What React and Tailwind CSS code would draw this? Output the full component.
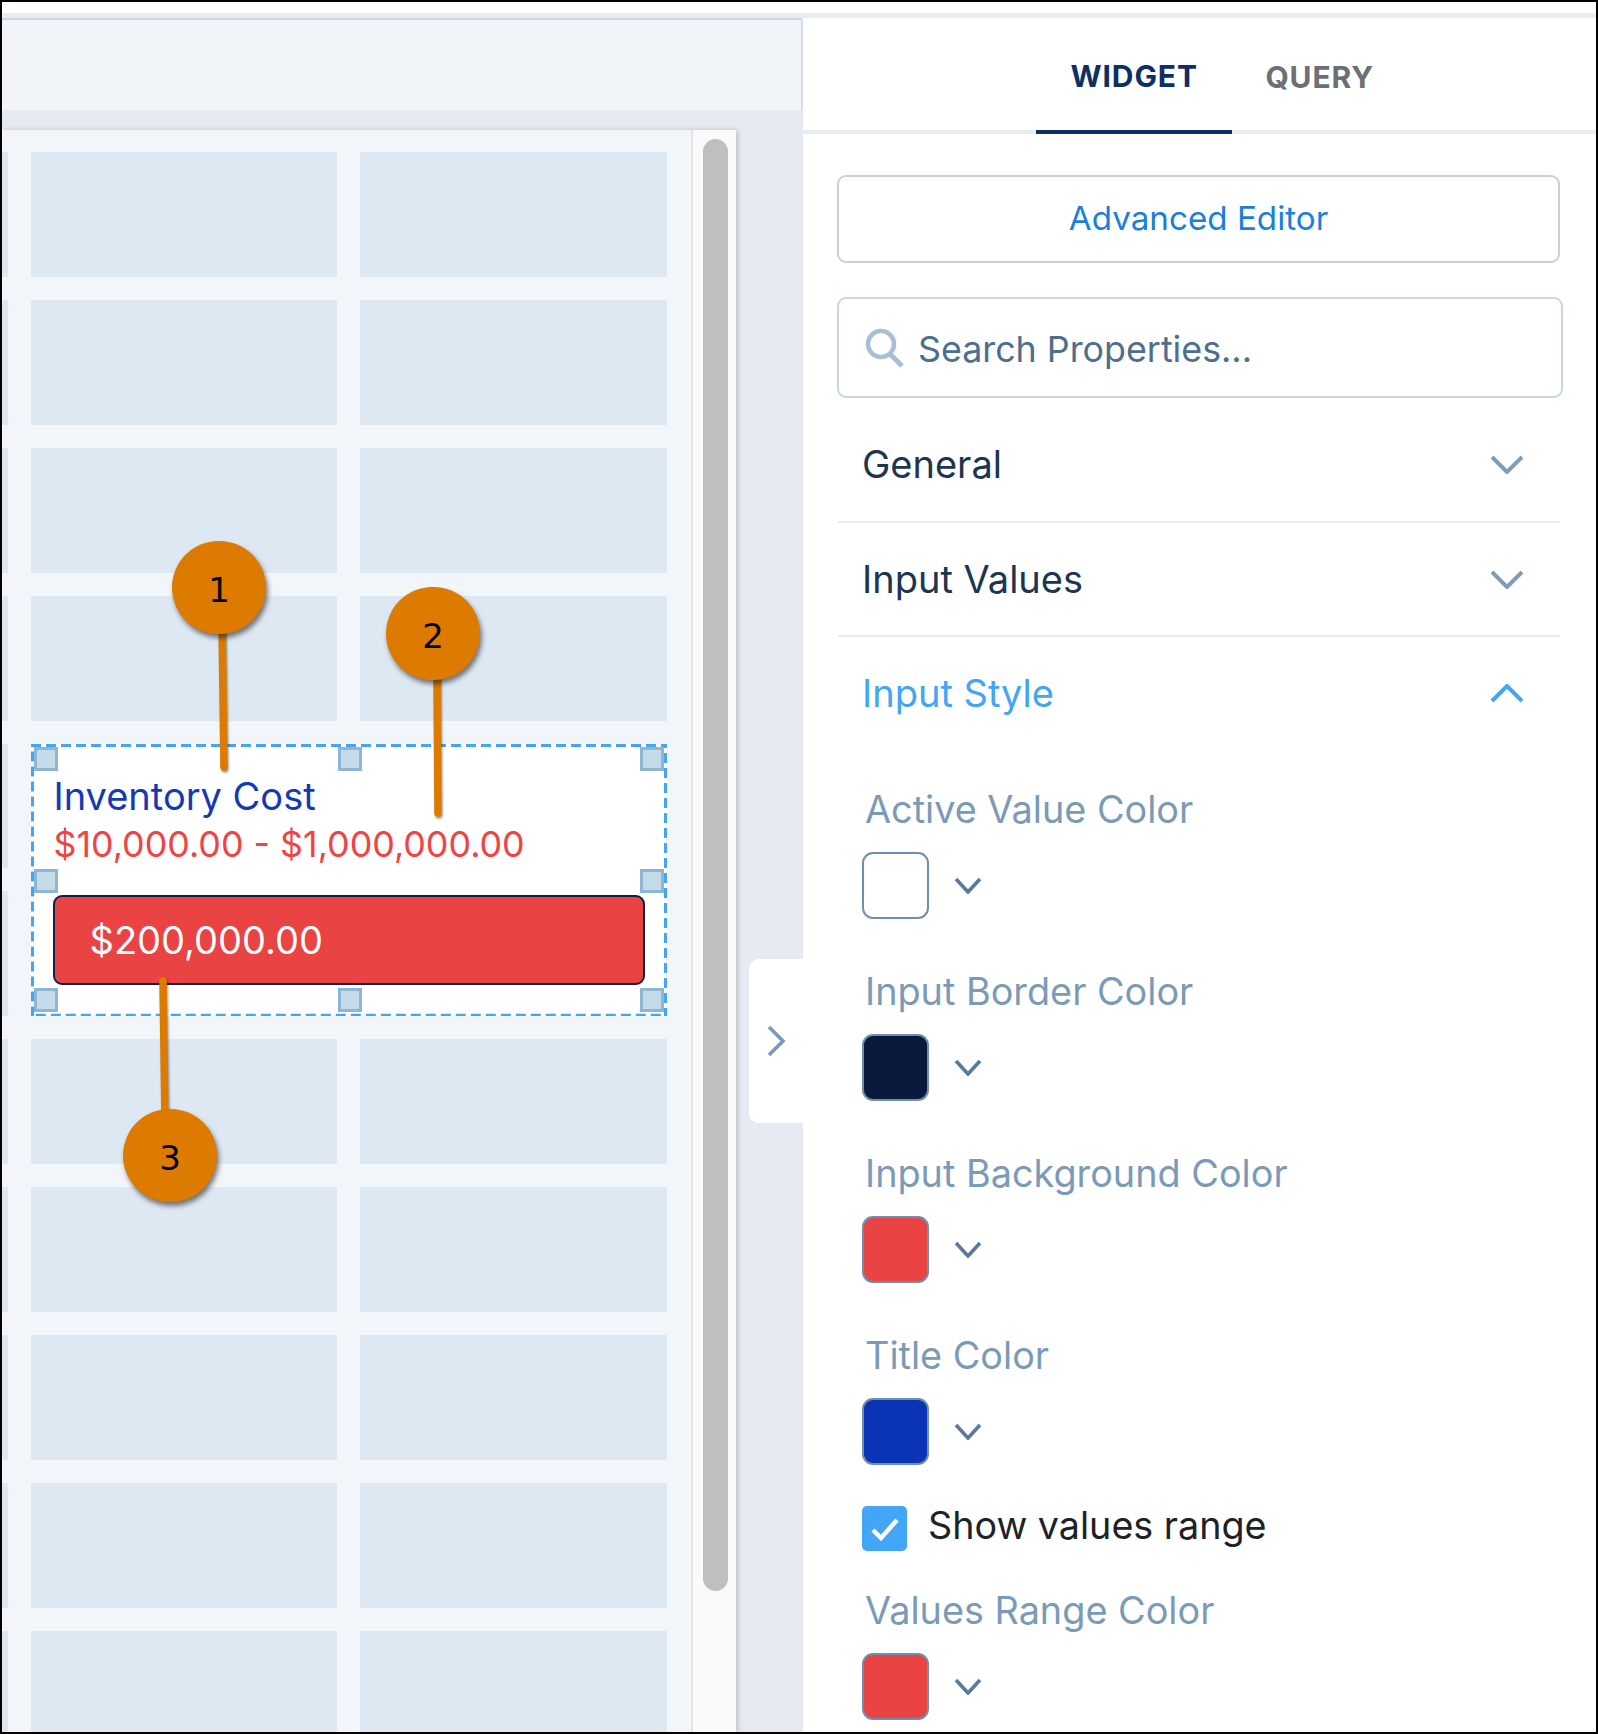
import React from "react";

const Chevron = ({ className = "", up = false, color = "#7f9dbb", w = 34, h = 19, sw = 4 }) => (
  <svg className={className} width={w} height={h} viewBox={`0 0 ${w} ${h}`} fill="none">
    <polyline
      points={up ? `2,${h - 2} ${w / 2},2 ${w - 2},${h - 2}` : `2,2 ${w / 2},${h - 2} ${w - 2},2`}
      stroke={color}
      strokeWidth={sw}
    />
  </svg>
);

const Cell = () => <div className="bg-[#dee8f2]" />;

const Handle = ({ className }) => (
  <div className={`absolute w-[24px] h-[24px] bg-[#c3dce8] border-[3px] border-[#8fb5d4] ${className}`} />
);

const Swatch = ({ color }) => (
  <div className="flex items-center h-[67px]">
    <div className={`w-[67px] h-[67px] rounded-[11px] border-2 border-[#6f8fae] ${color}`} />
    <Chevron className="ml-[25px]" w={28} h={17} sw={3.6} color="#5b7a9a" />
  </div>
);

const ColorField = ({ label, color, className = "" }) => (
  <div className={className}>
    <div className="ml-[3px] h-[42px] leading-[42px] text-[37.8px] text-[#7b9ab8]">{label}</div>
    <div className="mt-[22px]">
      <Swatch color={color} />
    </div>
  </div>
);

const Section = ({ title, open, border = true, height }) => (
  <div
    className={`${height} w-[722px] pl-[24px] pr-[36px] flex items-center justify-between ${
      border ? "border-b-2 border-[#e8edf2]" : ""
    }`}
  >
    <span className={`text-[38px] ${open ? "text-[#42a5f5]" : "text-[#1c3550]"}`}>{title}</span>
    <Chevron up={open} color={open ? "#42a5f5" : "#7f9dbb"} />
  </div>
);

const Marker = ({ className, children }) => (
  <div
    className={`absolute w-[94px] h-[93px] pt-[5px] rounded-full bg-[#dd7a00] shadow-[2px_4px_5px_rgba(0,0,0,0.5)] flex items-center justify-center text-[34px] text-black font-['DejaVu_Sans',sans-serif] ${className}`}
  >
    {children}
  </div>
);

export default function App() {
  const rows = Array.from({ length: 4 });
  const after = Array.from({ length: 5 });
  return (
    <div className="relative w-[1598px] h-[1734px] overflow-hidden font-[Inter,sans-serif] bg-white">
      <div className="w-full h-full box-border border-2 border-black flex flex-col bg-white overflow-hidden">
        <div className="h-[11px] shrink-0 bg-white" />
        <div className="h-[5px] shrink-0 bg-[#e8edf4]" />
        <div className="flex flex-1 min-h-0">
          {/* Left */}
          <div className="w-[801px] shrink-0 bg-[#e6eaf2] flex flex-col">
            <div className="h-[92px] shrink-0 bg-[#f1f5fa] border-t-2 border-[#c9d6e5] border-r-2 border-r-[#d5dfeb]" />
            <div className="pt-[20px] flex-1 min-h-0">
              <div className="w-[734px] h-full flex shadow-[2px_0_5px_rgba(0,0,0,0.18)]">
                <div className="w-[689px] bg-[#f2f6fb] pt-[22px] overflow-hidden">
                  <div className="grid grid-cols-[6px_306.5px_307px] gap-x-[22.5px] gap-y-[23px] auto-rows-[124.9px]">
                    {rows.map((_, i) => (
                      <React.Fragment key={i}>
                        <Cell />
                        <Cell />
                        <Cell />
                      </React.Fragment>
                    ))}
                    <Cell />
                    <div className="relative col-span-2 row-span-2 bg-white border-2 border-transparent pl-[20px] pt-[29px]">
                      <svg className="absolute -left-[2px] -top-[2px] w-[calc(100%+4px)] h-[calc(100%+4px)]" fill="none">
                        <rect width="100%" height="100%" stroke="#42a5f5" strokeWidth="6" strokeDasharray="10 5" />
                      </svg>
                      <Handle className="left-[1px] top-[1px]" />
                      <Handle className="left-[305px] top-[1px]" />
                      <Handle className="right-[1px] top-[1px]" />
                      <Handle className="left-[1px] top-[123px]" />
                      <Handle className="right-[1px] top-[123px]" />
                      <Handle className="left-[1px] bottom-[2px]" />
                      <Handle className="left-[305px] bottom-[2px]" />
                      <Handle className="right-[1px] bottom-[2px]" />
                      <div className="relative pl-[1px] h-[42px] leading-[42px] text-[38px] text-[#1539b5] whitespace-nowrap">
                        Inventory Cost
                      </div>
                      <div className="relative pl-[1px] mt-[6px] h-[42px] leading-[42px] text-[35.8px] text-[#ef4444] whitespace-nowrap">
                        $10,000.00 - $1,000,000.00
                      </div>
                      <div className="relative mt-[30px] w-[592px] h-[90px] rounded-[9px] border-2 border-[#0f2147] bg-[#e94343] pl-[35px] pt-[2px] flex items-center text-[38px] text-white">
                        $200,000.00
                      </div>
                    </div>
                    <Cell />
                    {after.map((_, i) => (
                      <React.Fragment key={i}>
                        <Cell />
                        <Cell />
                        <Cell />
                      </React.Fragment>
                    ))}
                  </div>
                </div>
                <div className="w-[45px] bg-[#fafafa] border-l-2 border-[#e5e5e5] pl-[10px] pt-[9px]">
                  <div className="w-[25px] h-[1452px] rounded-full bg-[#bfbfbf]" />
                </div>
              </div>
            </div>
          </div>

          {/* Right */}
          <div className="flex-1 min-w-0 bg-white">
            <div className="h-[116px] border-b-4 border-[#e8edf4] flex pl-[233px] box-border">
              <div className="h-[116px] px-[34.5px] pt-[4px] border-b-4 border-[#0b2e63] flex items-center text-[30px] font-bold tracking-[0.9px] text-[#0e2f63]">
                WIDGET
              </div>
              <div className="h-[116px] pl-[33px] pt-[2px] flex items-center text-[30px] font-bold tracking-[0.9px] text-[#6b7076]">
                QUERY
              </div>
            </div>
            <div className="pl-[34px] pt-[41px]">
              <div className="w-[723px] h-[88px] rounded-[9px] border-2 border-[#cfcfcf] flex items-center justify-center text-[33.2px] text-[#1a7fd9]">
                Advanced Editor
              </div>
              <div className="mt-[34px] w-[726px] h-[101px] rounded-[9px] border-2 border-[#c9d6e5] flex items-center pl-[26px]">
                <svg width="40" height="40" viewBox="0 0 40 40" fill="none">
                  <circle cx="16" cy="16" r="13" stroke="#a7bfd6" strokeWidth="4.5" />
                  <line x1="25" y1="26" x2="37" y2="38" stroke="#a7bfd6" strokeWidth="5" />
                </svg>
                <span className="ml-[13px] pt-[4px] text-[35.8px] text-[#4e6e8f]">Search Properties...</span>
              </div>
              <div className="mt-[10px] pl-[1px]">
                <Section title="General" height="h-[115px]" />
                <Section title="Input Values" height="h-[114px]" />
                <Section title="Input Style" open border={false} height="h-[113px]" />
              </div>
              <div className="pl-[25px] pt-[38px]">
                <ColorField label="Active Value Color" color="bg-white" />
                <ColorField className="mt-[51px]" label="Input Border Color" color="bg-[#0a1a3c]" />
                <ColorField className="mt-[51px]" label="Input Background Color" color="bg-[#e94343]" />
                <ColorField className="mt-[51px]" label="Title Color" color="bg-[#0b33b5]" />
                <div className="mt-[41px] flex items-center h-[45px]">
                  <div className="w-[45px] h-[45px] rounded-[5px] bg-[#42a5f5] flex items-center justify-center">
                    <svg width="30" height="24" viewBox="0 0 30 24" fill="none">
                      <polyline points="3,13 11,21 27,3" stroke="white" strokeWidth="4.5" />
                    </svg>
                  </div>
                  <span className="ml-[21px] mb-[6px] text-[37.7px] text-[#1d2227]">Show values range</span>
                </div>
                <ColorField className="mt-[38px]" label="Values Range Color" color="bg-[#e94343]" />
              </div>
            </div>
          </div>
        </div>
      </div>

      {/* Collapse tab */}
      <div className="absolute left-[749px] top-[959px] w-[54px] h-[164px] bg-white rounded-l-[10px] flex items-center pl-[17px]">
        <svg width="20" height="32" viewBox="0 0 20 32" fill="none">
          <polyline points="3,2 17,16 3,30" stroke="#7a9aba" strokeWidth="3.6" />
        </svg>
      </div>

      {/* Annotation lines */}
      <svg className="absolute left-0 top-0 pointer-events-none" width="1598" height="1734" fill="none">
        <g stroke="#dd7a00" strokeWidth="7.5" strokeLinecap="round" style={{ filter: "drop-shadow(1px 2px 1px rgba(0,0,0,0.4))" }}>
          <line x1="222" y1="620" x2="224" y2="767" />
          <line x1="437" y1="670" x2="438" y2="813" />
          <line x1="163" y1="981" x2="165" y2="1120" />
        </g>
      </svg>

      {/* Annotation markers */}
      <Marker className="left-[172px] top-[541px]">1</Marker>
      <Marker className="left-[386px] top-[587px]">2</Marker>
      <Marker className="left-[123px] top-[1109px]">3</Marker>
    </div>
  );
}
